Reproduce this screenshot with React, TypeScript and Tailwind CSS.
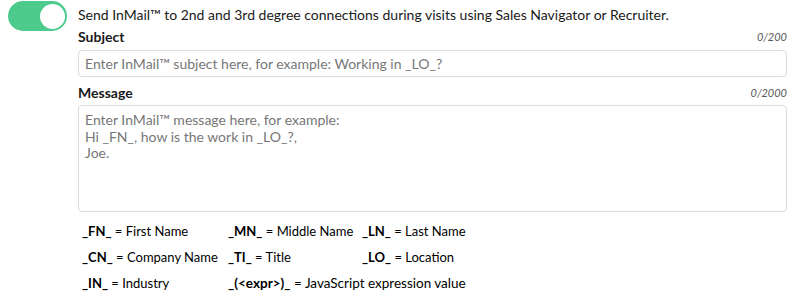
export default function App() {
  const legend: [string, string][][] = [
    [
      ["_FN_", "First Name"],
      ["_MN_", "Middle Name"],
      ["_LN_", "Last Name"],
    ],
    [
      ["_CN_", "Company Name"],
      ["_TI_", "Title"],
      ["_LO_", "Location"],
    ],
    [
      ["_IN_", "Industry"],
      ["_(<expr>)_", "JavaScript expression value"],
    ],
  ];

  return (
    <div className="h-[293px] w-[798px] overflow-hidden bg-white font-['Lato',sans-serif] text-[14px] text-[#1a1a1a]">
      <div className="flex">
        <div className="ml-2 mt-[1px] w-[70px] shrink-0">
          <div className="flex h-[30px] w-[59px] items-center justify-end rounded-full bg-[#4ccb8c] pr-[2px]">
            <div className="h-[25px] w-[25px] rounded-full bg-white" />
          </div>
        </div>

        <div className="mr-[11px] flex-1">
          <div className="pt-[6px] leading-[18px]">
            Send InMail™ to 2nd and 3rd degree connections during visits using Sales Navigator or Recruiter.
          </div>

          <div className="mt-[4px] flex h-[18px] items-center justify-between leading-[18px]">
            <span className="font-bold">Subject</span>
            <span className="text-[11px] italic text-[#555]">0/200</span>
          </div>
          <input
            type="text"
            placeholder="Enter InMail™ subject here, for example: Working in _LO_?"
            className="mt-[4px] block h-[27px] w-full rounded-[4px] border border-[#dcdcdc] px-[6px] text-[14px] placeholder:text-[#777] focus:outline-none"
          />

          <div className="mt-[7px] flex h-[18px] items-center justify-between leading-[18px]">
            <span className="font-bold">Message</span>
            <span className="text-[11px] italic text-[#555]">0/2000</span>
          </div>
          <textarea
            placeholder={"Enter InMail™ message here, for example:\nHi _FN_, how is the work in _LO_?,\nJoe."}
            className="mt-[3px] block h-[107px] w-full resize-none rounded-[4px] border border-[#dcdcdc] px-[6px] py-[6px] text-[14px] leading-[16.5px] placeholder:text-[#777] focus:outline-none"
          />

          <div className="mt-[10px] grid grid-cols-[146px_134px_auto] gap-y-[8px] pl-[4px] text-[13px] leading-[18px] text-black">
            {legend.map((row, i) =>
              row.map(([code, label], j) => (
                <div
                  key={`${i}-${j}`}
                  className={i === 2 && j === 1 ? "col-span-2 whitespace-nowrap text-[13.5px]" : "whitespace-nowrap"}
                >
                  <b>{code}</b> = {label}
                </div>
              ))
            )}
          </div>
        </div>
      </div>
    </div>
  );
}
